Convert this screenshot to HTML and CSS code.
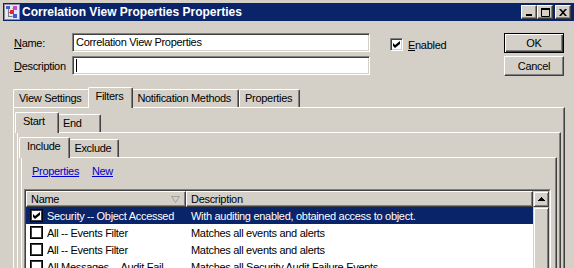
FILE: index.html
```html
<!DOCTYPE html>
<html lang="en">
<head>
    <meta charset="UTF-8">
    <meta name="viewport" content="width=device-width, initial-scale=1.0">
    <title>Correlation View Properties Properties</title>
    <link rel="stylesheet" href="styles.css">
</head>
<body>
    <div class="window">
        <div class="titlebar">
            <svg class="app-icon" width="16" height="16" viewBox="0 0 16 16">
                <rect x="0.5" y="0.5" width="15" height="15" fill="#e6e6ee" stroke="#8c8c9c"/>
                <path d="M4.5 4v9M4.5 8.5h2M4.5 12.5h4M8.5 4.5h1" stroke="#7a7a8a" fill="none"/>
                <rect x="2" y="2" width="4" height="3" fill="#4a5cc8"/>
                <rect x="9" y="2" width="4" height="4" fill="#c848d8"/>
                <rect x="6" y="6" width="4" height="4" fill="#e02828"/>
                <rect x="9" y="10" width="4" height="4" fill="#3a58e0"/>
            </svg>
            <span class="title">Correlation View Properties Properties</span>
            <div class="caption-buttons">
                <span class="cap-btn">
                    <svg width="8" height="8" viewBox="0 0 8 8"><rect x="1" y="6" width="6" height="2" fill="#000"/></svg>
                </span>
                <span class="cap-btn">
                    <svg width="9" height="9" viewBox="0 0 9 9"><path d="M0.5 0.5h8v8h-8z" fill="none" stroke="#000"/><rect x="0" y="0" width="9" height="2" fill="#000"/></svg>
                </span>
                <span class="cap-btn close">
                    <svg width="8" height="7" viewBox="0 0 8 7"><path d="M0 0h2l2 2.2 2-2.2h2l-3 3.5 3 3.5h-2l-2-2.2-2 2.2h-2l3-3.5z" fill="#000"/></svg>
                </span>
            </div>
        </div>

        <div class="top">
            <div class="fields">
                <div class="field">
                    <label><u>N</u>ame:</label>
                    <div class="textbox">Correlation View Properties</div>
                </div>
                <div class="field">
                    <label><u>D</u>escription</label>
                    <div class="textbox"><span class="caret"></span></div>
                </div>
            </div>
            <div class="enabled">
                <span class="checkbox">
                    <svg width="7" height="7" viewBox="0 0 7 7"><path d="M0 2l2 2 5-4v3l-5 4-2-2z" fill="#000"/></svg>
                </span>
                <span class="enabled-label"><u>E</u>nabled</span>
            </div>
            <div class="buttons">
                <div class="btn default">OK</div>
                <div class="btn">Cancel</div>
            </div>
        </div>

        <div class="tabs outer">
            <div class="tab-strip">
                <div class="tab">View Settings</div>
                <div class="tab active">Filters</div>
                <div class="tab">Notification Methods</div>
                <div class="tab">Properties</div>
            </div>
            <div class="tab-panel">
                <div class="tabs">
                    <div class="tab-strip">
                        <div class="tab small active">Start</div>
                        <div class="tab small">End</div>
                    </div>
                    <div class="tab-panel">
                        <div class="tabs">
                            <div class="tab-strip">
                                <div class="tab small active">Include</div>
                                <div class="tab small">Exclude</div>
                            </div>
                            <div class="tab-panel">
                                <div class="links">
                                    <a href="#">Properties</a>
                                    <a href="#">New</a>
                                </div>
                                <div class="list">
                                    <div class="list-inner">
                                        <div class="list-main">
                                            <div class="list-header">
                                                <div class="head-cell col-name">
                                                    <span>Name</span>
                                                    <svg class="sort-arrow" width="9" height="7" viewBox="0 0 9 7"><path d="M0.5 0.5h8l-4 6z" fill="none" stroke="#a0a0a0"/></svg>
                                                </div>
                                                <div class="head-cell col-desc">Description</div>
                                            </div>
                                            <div class="row selected">
                                                <div class="cell col-name"><span class="row-check"><svg width="7" height="7" viewBox="0 0 7 7"><path d="M0 2l2 2 5-4v3l-5 4-2-2z" fill="#000"/></svg></span>Security -- Object Accessed</div>
                                                <div class="cell col-desc">With auditing enabled, obtained access to object.</div>
                                            </div>
                                            <div class="row">
                                                <div class="cell col-name"><span class="row-check"></span>All -- Events Filter</div>
                                                <div class="cell col-desc">Matches all events and alerts</div>
                                            </div>
                                            <div class="row">
                                                <div class="cell col-name"><span class="row-check"></span>All -- Events Filter</div>
                                                <div class="cell col-desc">Matches all events and alerts</div>
                                            </div>
                                            <div class="row">
                                                <div class="cell col-name"><span class="row-check"></span>All Messages -- Audit Fail</div>
                                                <div class="cell col-desc">Matches all Security Audit Failure Events</div>
                                            </div>
                                        </div>
                                        <div class="scrollbar">
                                            <div class="scroll-btn">
                                                <svg width="7" height="4" viewBox="0 0 7 4" shape-rendering="crispEdges"><path d="M3 0h1v1h1v1h1v1h1v1h-7v-1h1v-1h1v-1h1z" fill="#000"/></svg>
                                            </div>
                                            <div class="scroll-thumb"></div>
                                        </div>
                                    </div>
                                </div>
                            </div>
                        </div>
                    </div>
                </div>
            </div>
        </div>
    </div>
</body>
</html>
```

FILE: styles.css
```css
* {
    box-sizing: border-box;
}
body {
    margin: 0;
    width: 574px;
    height: 268px;
    overflow: hidden;
    background-color: #d4d0c8;
    font-family: "Liberation Sans", Arial, sans-serif;
    font-size: 11px;
    letter-spacing: -0.3px;
    color: #000;
}
.window {
    padding: 3px 0 0 3px;
}

/* title bar */
.titlebar {
    height: 18px;
    background-color: #0a246a;
    color: #fff;
    display: flex;
    align-items: center;
    padding-left: 1px;
}
.app-icon {
    flex: none;
}
.title {
    flex: 1;
    margin-left: 2px;
    font-size: 12px;
    font-weight: bold;
    letter-spacing: 0;
    white-space: nowrap;
}
.caption-buttons {
    display: flex;
    margin-right: 3px;
}
.cap-btn {
    width: 16px;
    height: 14px;
    background-color: #d4d0c8;
    border: 1px solid;
    border-color: #fff #404040 #404040 #fff;
    box-shadow: inset -1px -1px #808080;
    display: flex;
    align-items: center;
    justify-content: center;
}
.cap-btn.close {
    margin-left: 2px;
}

/* name / description area */
.top {
    display: flex;
    padding: 12px 0 0 11px;
}
.fields {
    display: flex;
    flex-direction: column;
    gap: 4px;
}
.field {
    display: flex;
    align-items: center;
}
.field label {
    width: 58px;
}
.textbox {
    width: 298px;
    height: 19px;
    background-color: #fff;
    border: 1px solid;
    border-color: #808080 #fff #fff #808080;
    box-shadow: inset 1px 1px #404040, inset -1px -1px #d4d0c8;
    padding: 1px 3px;
    line-height: 15px;
    white-space: nowrap;
    display: flex;
    align-items: center;
}
.caret {
    width: 1px;
    height: 13px;
    background-color: #000;
}
.enabled {
    width: 134px;
    padding-left: 20px;
    margin-top: 5px;
    height: 13px;
    display: flex;
    align-items: center;
}
.checkbox {
    width: 13px;
    height: 13px;
    background-color: #fff;
    border: 1px solid;
    border-color: #808080 #fff #fff #808080;
    box-shadow: inset 1px 1px #404040, inset -1px -1px #d4d0c8;
    display: flex;
    align-items: center;
    justify-content: center;
}
.enabled-label {
    margin-left: 5px;
}
.buttons {
    width: 60px;
    display: flex;
    flex-direction: column;
    gap: 3px;
}
.btn {
    height: 20px;
    border: 1px solid;
    border-color: #fff #404040 #404040 #fff;
    box-shadow: inset -1px -1px #808080;
    text-align: center;
    line-height: 18px;
}
.btn.default {
    border-color: #000;
    box-shadow: inset 1px 1px #fff, inset -1px -1px #404040, inset -2px -2px #808080;
}

/* tabs */
.tabs.outer {
    margin: 11px 9px 0 10px;
}
.tab-strip {
    display: flex;
    align-items: flex-end;
    height: 20px;
}
.tab {
    height: 18px;
    padding: 1px 7px 0 5px;
    line-height: 15px;
    white-space: nowrap;
    border: 1px solid;
    border-color: #fff #404040 transparent #fff;
    border-bottom: none;
    border-radius: 2px 2px 0 0;
    box-shadow: inset -1px 0 #808080;
}
.tab.small {
    min-width: 44px;
}
.tab.active {
    position: relative;
    z-index: 1;
    height: 21px;
    margin: 0 -2px -1px;
    padding-left: 7px;
    padding-right: 9px;
    background-color: #d4d0c8;
}
.tab-panel {
    border-top: 1px solid #fff;
    border-left: 1px solid #fff;
    border-right: 1px solid #404040;
    box-shadow: inset -1px 0 #808080;
    padding: 4px 3px 0 3px;
    height: 200px;
}

/* filter list */
.links {
    margin: 3px 0 0 7px;
    line-height: 13px;
}
.links a {
    color: #0000cc;
    margin-right: 10px;
}
.list {
    margin: 11px 2px 0 -1px;
    border: 1px solid;
    border-color: #808080 #fff #fff #808080;
}
.list-inner {
    border: 1px solid;
    border-color: #404040 #d4d0c8 #d4d0c8 #404040;
    background-color: #fff;
    display: flex;
    height: 100px;
}
.list-main {
    flex: 1;
}
.list-header {
    display: flex;
    height: 16px;
}
.head-cell {
    background-color: #d4d0c8;
    border: 1px solid;
    border-color: #fff #404040 #404040 #fff;
    box-shadow: inset -1px -1px #808080;
    padding-left: 4px;
    line-height: 13px;
    display: flex;
    align-items: center;
}
.col-name {
    width: 160px;
    flex: none;
}
.col-desc {
    flex: 1;
}
.sort-arrow {
    margin-left: auto;
    margin-right: 5px;
}
.row {
    display: flex;
    height: 17px;
    align-items: center;
    white-space: nowrap;
}
.row.selected {
    background-color: #0a246a;
    color: #fff;
}
.cell {
    display: flex;
    align-items: center;
    overflow: hidden;
}
.cell.col-name {
    padding-left: 4px;
}
.cell.col-desc {
    padding-left: 5px;
}
.row-check {
    width: 13px;
    height: 13px;
    margin-right: 4px;
    background-color: #fff;
    border: 1px solid #000;
    box-shadow: inset 0 0 0 1px #404040;
    display: flex;
    align-items: center;
    justify-content: center;
    flex: none;
}
.scrollbar {
    width: 16px;
    display: flex;
    flex-direction: column;
    background-color: #e8e6e2;
}
.scroll-btn,
.scroll-thumb {
    background-color: #d4d0c8;
    border: 1px solid;
    border-color: #d4d0c8 #404040 #404040 #d4d0c8;
    box-shadow: inset 1px 1px #fff, inset -1px -1px #808080;
}
.scroll-btn {
    height: 16px;
    display: flex;
    align-items: center;
    justify-content: center;
}
.scroll-thumb {
    flex: 1;
}
```
